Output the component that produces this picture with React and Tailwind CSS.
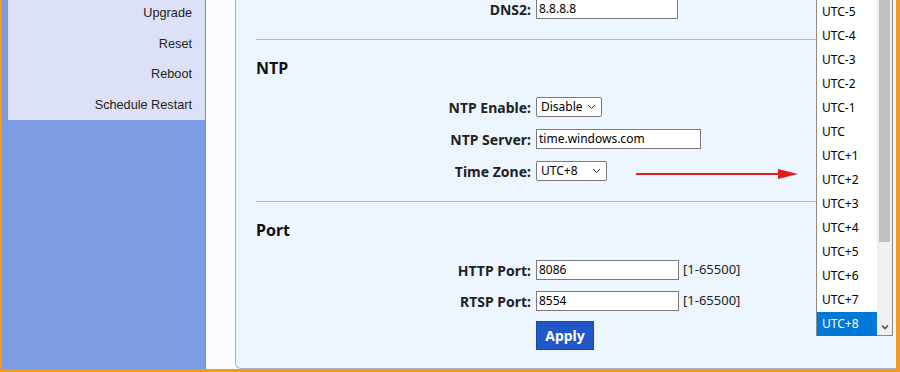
import React from 'react';

const menu = ['Upgrade', 'Reset', 'Reboot', 'Schedule Restart'];
const zones = ['UTC-5', 'UTC-4', 'UTC-3', 'UTC-2', 'UTC-1', 'UTC', 'UTC+1', 'UTC+2', 'UTC+3', 'UTC+4', 'UTC+5', 'UTC+6', 'UTC+7', 'UTC+8'];

function Chevron() {
  return (
    <svg width="9" height="6" viewBox="0 0 9 6" className="shrink-0">
      <path d="M1 1l3.5 3.5L8 1" fill="none" stroke="#333" strokeWidth="1" />
    </svg>
  );
}

function Row({ label, children }) {
  return (
    <div className="grid grid-cols-[295px_1fr] gap-x-[5px] h-[32px] items-center">
      <div className="text-right font-bold text-[14px] text-[#222]">{label}</div>
      <div className="flex items-center">{children}</div>
    </div>
  );
}

function TextBox({ value, w }) {
  return (
    <div className={`h-[20px] bg-white border border-[#7a7a7a] flex items-center pl-[2px] text-[12px] text-black ${w}`}>
      {value}
    </div>
  );
}

function Select({ value, w }) {
  return (
    <div className={`h-[20px] bg-white border border-[#7a7a7a] rounded-[2px] flex items-center justify-between pl-[4px] pr-[5px] text-[12px] text-black ${w}`}>
      <span>{value}</span>
      <Chevron />
    </div>
  );
}

export default function App() {
  return (
    <div className="relative w-[900px] h-[372px] overflow-hidden bg-white border-l-2 border-r-[4px] border-b-[3px] border-[#f39a1e] flex" style={{ fontFamily: '"Noto Sans", sans-serif' }}>
      {/* sidebar */}
      <aside className="w-[204px] shrink-0 bg-[#7b9be3] border-r border-[#6e8fd8]">
        <div className="ml-[6px] h-[120px] bg-[#dde1f8] overflow-hidden">
          <ul className="-mt-[2px] flex flex-col items-end pr-[13px] text-[12.7px] text-[#222]" style={{ fontFamily: '"Liberation Sans", Arial, sans-serif' }}>
            {menu.map((m) => (
              <li key={m} className="h-[30.7px] flex items-center">{m}</li>
            ))}
          </ul>
        </div>
      </aside>

      <div className="w-[29px] shrink-0 bg-[#fafcff]" />

      {/* content panel */}
      <main className="flex-1 bg-[#edf5fe] border-l border-b border-[#aab3c3] rounded-bl-[6px] text-[#222]">
        <div className="-mt-[7px]">
          <Row label="DNS2:"><TextBox value="8.8.8.8" w="w-[142px]" /></Row>
        </div>
        <div className="mt-[14px] mx-[20px] border-t border-[#b4b8bf]" />
        <h2 className="mt-[18px] ml-[20px] h-[20px] leading-[20px] font-bold text-[16px] text-[#111]">NTP</h2>
        <div className="mt-[13px]">
          <Row label="NTP Enable:"><Select value="Disable" w="w-[66px]" /></Row>
          <Row label="NTP Server:"><TextBox value="time.windows.com" w="w-[165px]" /></Row>
          <Row label="Time Zone:"><Select value="UTC+8" w="w-[71px]" /></Row>
        </div>
        <div className="mt-[14px] mx-[20px] border-t border-[#b4b8bf]" />
        <h2 className="mt-[18px] ml-[20px] h-[20px] leading-[20px] font-bold text-[16px] text-[#111]">Port</h2>
        <div className="mt-[14px]">
          <Row label="HTTP Port:">
            <TextBox value="8086" w="w-[143px]" />
            <span className="ml-[4px] text-[13px]">[1-65500]</span>
          </Row>
          <div className="-mt-[1px]">
            <Row label="RTSP Port:">
              <TextBox value="8554" w="w-[143px]" />
              <span className="ml-[4px] text-[13px]">[1-65500]</span>
            </Row>
          </div>
          <div className="grid grid-cols-[295px_1fr] gap-x-[5px] mt-[4px]">
            <div />
            <div>
              <button className="w-[58px] h-[29px] bg-[#2257c9] text-white font-bold text-[14px] border border-[#1b47a8]">Apply</button>
            </div>
          </div>
        </div>
      </main>

      {/* red arrow annotation */}
      <svg className="absolute left-[632px] top-[167px]" width="166" height="14" viewBox="0 0 166 14">
        <line x1="2" y1="7" x2="148" y2="7" stroke="#e31b1b" strokeWidth="2" />
        <polygon points="144,2 164,7 144,12" fill="#e31b1b" />
      </svg>

      {/* open time zone list */}
      <div className="absolute left-[814px] top-0 w-[77px] h-[336px] bg-white border border-[#8a8a8a] border-t-0 flex text-[12px]">
        <ul className="flex-1">
          {zones.map((z) => (
            <li key={z} className={`h-[24px] flex items-center pl-[5px] ${z === 'UTC+8' ? 'bg-[#0078d7] text-white' : 'text-black'}`}>{z}</li>
          ))}
        </ul>
        <div className="w-[15px] bg-[#f0f0f0] flex flex-col">
          <div className="mx-[2px] h-[242px] bg-[#c1c1c1]" />
          <div className="flex-1" />
          <div className="h-[17px] flex items-center justify-center">
            <svg width="8" height="6" viewBox="0 0 8 6">
              <path d="M1 1.5l3 3 3-3" fill="none" stroke="#505050" strokeWidth="1.6" />
            </svg>
          </div>
        </div>
      </div>
    </div>
  );
}
